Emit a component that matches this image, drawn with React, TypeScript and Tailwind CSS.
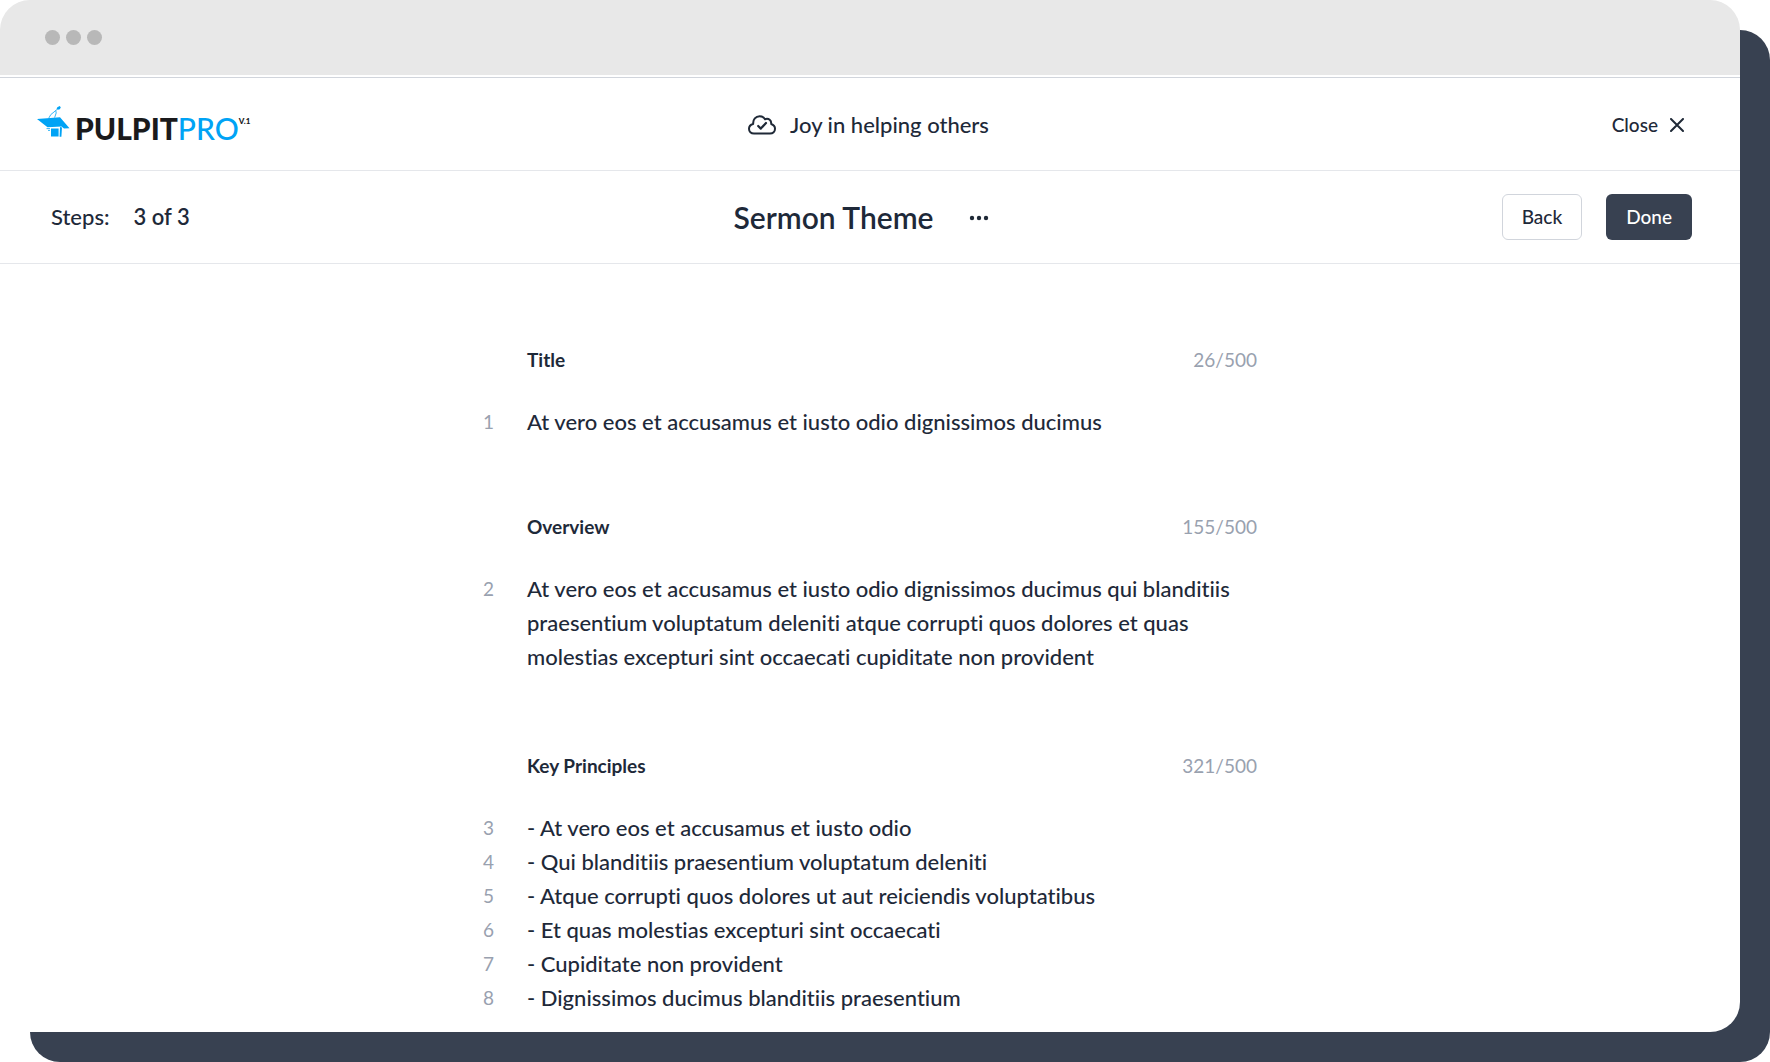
import React from "react";

type Section = {
  title: string;
  count: string;
  lines: { n: number; text: string }[];
};

const sections: Section[] = [
  {
    title: "Title",
    count: "26/500",
    lines: [{ n: 1, text: "At vero eos et accusamus et iusto odio dignissimos ducimus" }],
  },
  {
    title: "Overview",
    count: "155/500",
    lines: [
      {
        n: 2,
        text: "At vero eos et accusamus et iusto odio dignissimos ducimus qui blanditiis praesentium voluptatum deleniti atque corrupti quos dolores et quas molestias excepturi sint occaecati cupiditate non provident",
      },
    ],
  },
  {
    title: "Key Principles",
    count: "321/500",
    lines: [
      { n: 3, text: "- At vero eos et accusamus et iusto odio" },
      { n: 4, text: "- Qui blanditiis praesentium voluptatum deleniti" },
      { n: 5, text: "- Atque corrupti quos dolores ut aut reiciendis voluptatibus" },
      { n: 6, text: "- Et quas molestias excepturi sint occaecati" },
      { n: 7, text: "- Cupiditate non provident" },
      { n: 8, text: "- Dignissimos ducimus blanditiis praesentium" },
    ],
  },
];

function LogoMark() {
  return (
    <svg width="34" height="32" viewBox="0 0 34 32" className="shrink-0" aria-hidden="true">
      <g fill="#00a3f5">
        <path d="M0 13 L23 11.2 L32.5 22.2 L27 22.6 L24.5 20.6 L10.5 21.2 Z" />
        <path d="M14 22.4 H21.6 V30.5 H14 Z" />
        <path d="M23 21 L25 21.4 L24.4 30.8 L22.6 30.8 Z" />
        <path d="M20.4 1.2 L22.6 0 L23.8 1.2 L22.8 3.2 L20.6 3.8 L19.6 2.6 Z" />
      </g>
      <g fill="none" stroke="#00a3f5" strokeWidth="0.8">
        <path d="M20.4 3.2 L13.8 8.6 L11.6 12.4" />
        <path d="M18.8 4.6 L19.2 7 L17.6 11.6" />
        <path d="M9.5 22.6 H13 M11 24.4 H13" />
      </g>
    </svg>
  );
}

function CloudCheck() {
  return (
    <svg
      width="28"
      height="20"
      viewBox="0 0 28 20"
      fill="none"
      stroke="#1f2937"
      strokeWidth="2"
      strokeLinecap="round"
      strokeLinejoin="round"
      className="shrink-0"
      aria-hidden="true"
    >
      <path d="M6 18.6 C3 18.6 1 16.6 1 13.8 C1 11.4 2.8 9.6 5.2 9 C4.8 4.4 7.8 1.2 11.6 1.2 C14 1.2 15.8 2.2 17 4.2 C20.8 3 23.6 5.4 23.2 9 C25.6 9.8 27 11.6 27 13.8 C27 16.6 25 18.6 22 18.6 Z" />
      <path d="M10.2 11 L12.8 13.6 L18 8" strokeWidth="2.2" />
    </svg>
  );
}

export default function App() {
  return (
    <div className="relative flex min-h-screen bg-white pr-[30px] pb-[30px] font-['Lato',sans-serif] text-gray-800 [font-variant-ligatures:none]">
      <div className="absolute top-[30px] right-0 bottom-0 left-[30px] rounded-[30px] bg-[#384151]" />
      <div className="relative flex flex-1 flex-col overflow-hidden rounded-[30px] bg-white">
        <div className="flex h-[75px] items-center gap-1.5 bg-[#e8e8e8] pl-[45px]">
          <span className="size-[15px] rounded-full bg-[#b8b8b8]" />
          <span className="size-[15px] rounded-full bg-[#b8b8b8]" />
          <span className="size-[15px] rounded-full bg-[#b8b8b8]" />
        </div>

        <header className="mt-0.5 grid h-[94px] grid-cols-[1fr_auto_1fr] items-center border-y border-t-gray-300 border-b-gray-200 pt-0.5 pr-10 pl-[37px]">
          <a href="#" aria-label="Pulpit Pro" className="flex items-start gap-1 justify-self-start">
            <LogoMark />
            <span className="mt-1.5 flex text-[30px] leading-8">
              <span className="font-black text-[#1a1a1c]">PULPIT</span>
              <span className="font-medium text-[#00a3f5]">PRO</span>
            </span>
            <span className="-ml-1 mt-2.5 text-[8px] leading-[10px] font-black text-[#1a1a1c]">V.1</span>
          </a>
          <div className="flex items-center gap-3.5">
            <CloudCheck />
            <span className="text-[22px] leading-7 font-medium">Joy in helping others</span>
          </div>
          <button type="button" className="mr-4 flex items-center gap-3 justify-self-end text-[19px] leading-6 font-medium">
            Close
            <svg width="14" height="14" viewBox="0 0 14 14" stroke="#1f2937" strokeWidth="2" strokeLinecap="round" aria-hidden="true">
              <path d="M1 1 L13 13 M13 1 L1 13" />
            </svg>
          </button>
        </header>

        <div className="grid h-[93px] grid-cols-[1fr_auto_1fr] items-center border-b border-gray-200 pr-12 pl-[51px]">
          <div className="flex gap-6 text-[22px] leading-7">
            <span className="font-medium">Steps:</span>
            <span className="font-semibold">3 of 3</span>
          </div>
          <div className="mr-5 flex items-center gap-9">
            <h1 className="text-[30px] leading-9 font-semibold">Sermon Theme</h1>
            <button type="button" aria-label="More options" className="flex items-center pt-0.5">
              <svg width="20" height="6" viewBox="0 0 20 6" fill="#1f2937" aria-hidden="true">
                <circle cx="3" cy="3" r="2.2" />
                <circle cx="10" cy="3" r="2.2" />
                <circle cx="17" cy="3" r="2.2" />
              </svg>
            </button>
          </div>
          <div className="flex gap-6 justify-self-end text-[19px] leading-6 font-medium">
            <button type="button" className="h-[46px] rounded-md border border-gray-300 bg-white px-[19px]">
              Back
            </button>
            <button type="button" className="h-[46px] rounded-md bg-[#384151] px-5 text-white">
              Done
            </button>
          </div>
        </div>

        <main className="mx-auto flex w-full max-w-[774px] flex-col gap-[76px] pt-[84px] pb-4">
          {sections.map((s) => (
            <section key={s.title} className="last:pt-1">
              <div className="mb-[33px] flex items-center justify-between pl-11 text-[19px] leading-6">
                <h2 className="font-bold">{s.title}</h2>
                <span className="text-gray-400">{s.count}</span>
              </div>
              {s.lines.map((l) => (
                <div key={l.n} className="flex leading-[34px]">
                  <span className="w-11 shrink-0 text-[19px] text-gray-400">{l.n}</span>
                  <p className="flex-1 text-[22px] font-medium">{l.text}</p>
                </div>
              ))}
            </section>
          ))}
        </main>
      </div>
    </div>
  );
}
